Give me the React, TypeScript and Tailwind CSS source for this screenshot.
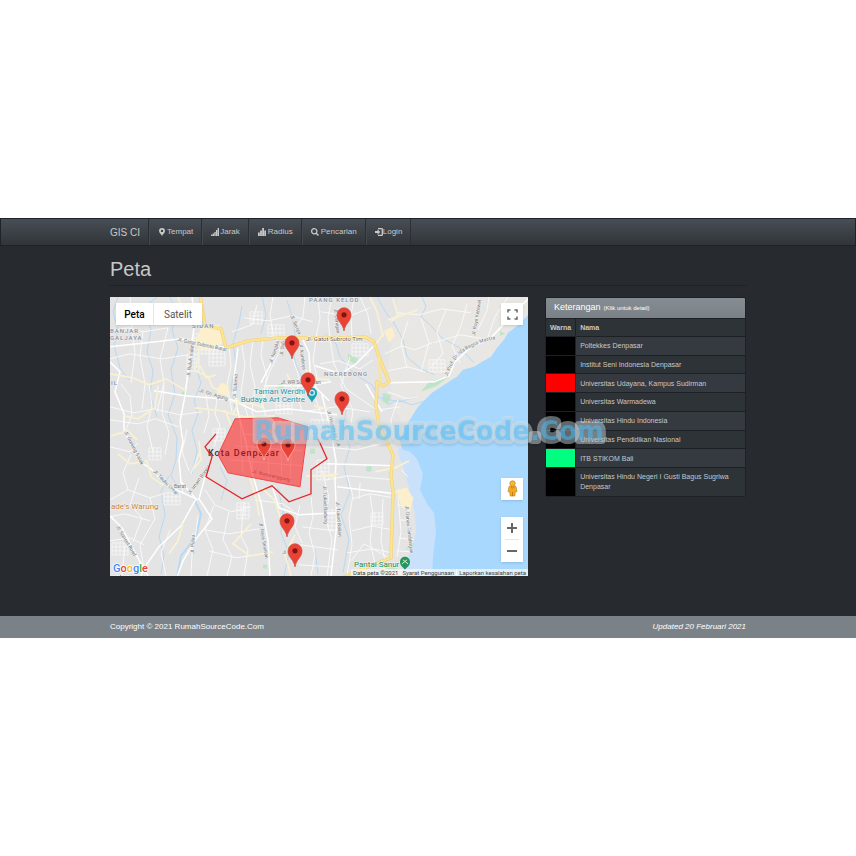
import React from 'react';

type IconProps = { children: React.ReactNode };

const Icon = ({ children }: IconProps) => (
  <svg className="h-2 w-2 fill-current" viewBox="0 0 16 16" aria-hidden="true">
    {children}
  </svg>
);

const navItems = [
  {
    label: 'Tempat',
    gap: 'gap-px',
    icon: <path fillRule="evenodd" d="M8 0a6 6 0 0 0-6 6c0 3.500 4 6 6 10 2-4 6-6.500 6-10a6 6 0 0 0-6-6zm0 3.400a2.400 2.400 0 1 1 0 4.800 2.400 2.400 0 0 1 0-4.800z" />,
  },
  {
    label: 'Jarak',
    gap: 'gap-px',
    icon: <path d="M0 13h2.700v3H0zM3.300 11H6v5H3.300zM6.600 8h2.700v8H6.600zM9.900 4h2.700v12H9.900zM13.200 0H16v16h-2.800z" />,
  },
  {
    label: 'Radius',
    gap: 'gap-0.5',
    icon: <path d="M0 9h3.600v7H0zM4.200 5h3.600v11H4.200zM8.400 0H12v16H8.400zM12.600 5H16v11h-3.400z" />,
  },
  {
    label: 'Pencarian',
    gap: 'gap-0.5',
    icon: <path fillRule="evenodd" d="M6.500 0a6.500 6.500 0 1 0 3.400 12l4 4 2.100-2.100-4-4A6.500 6.500 0 0 0 6.500 0zm0 2.500a4 4 0 1 1 0 8 4 4 0 0 1 0-8z" />,
  },
  {
    label: 'Login',
    gap: 'gap-0',
    icon: <path d="M0 6h5V2.500L10.500 8 5 13.500V10H0zM6 0h7.500A2.500 2.500 0 0 1 16 2.500v11a2.500 2.500 0 0 1-2.500 2.500H6v-2.500h7.200v-11H6z" />,
  },
];

const places = [
  { name: 'Poltekkes Denpasar', color: 'bg-black' },
  { name: 'Institut Seni Indonesia Denpasar', color: 'bg-black' },
  { name: 'Universitas Udayana, Kampus Sudirman', color: 'bg-[#ff0000]' },
  { name: 'Universitas Warmadewa', color: 'bg-black' },
  { name: 'Universitas Hindu Indonesia', color: 'bg-black' },
  { name: 'Universitas Pendidikan Nasional', color: 'bg-black' },
  { name: 'ITB STIKOM Bali', color: 'bg-[#00ff80]' },
  { name: 'Universitas Hindu Negeri I Gusti Bagus Sugriwa Denpasar', color: 'bg-black' },
];

const markers = [
  { x: 344, y: 331, outline: '#cf4a40' },
  { x: 292, y: 359, outline: '#cf4a40' },
  { x: 308, y: 396, outline: '#cf4a40' },
  { x: 342, y: 415, outline: '#cf4a40' },
  { x: 264, y: 460, outline: '#ffb3ad' },
  { x: 288, y: 461, outline: '#ffb3ad' },
  { x: 287, y: 537, outline: '#cf4a40' },
  { x: 295, y: 567, outline: '#cf4a40' },
];

// street names: text, x, y, rotation
const streets: [string, number, number, number][] = [
  ['Jl. Gatot Subroto Barat', 177, 341, 12],
  ['Jl. Buluh Indah', 190, 377, -83],
  ['Jl. Gn. Agung', 199, 392, 17],
  ['Jl. Sutomo', 236, 398, -86],
  ['Jl. WR Supratman', 281, 384, 0],
  ['Jl. Nangka', 272, 364, -72],
  ['Jl. Suli', 283, 356, -84],
  ['Jl. Kamboja', 299, 344, 82],
  ['Jl. Seroja', 290, 316, 66],
  ['Jl. Cenigan', 334, 309, 84],
  ['Jl. Raya Ketewel', 475, 336, -80],
  ['Jl. Hayam Wuruk', 327, 411, 74],
  ['Jl. Gunung Salak', 124, 432, 63],
  ['Jl. Teuku Umar', 153, 472, 45],
  ['Barat', 174, 488, 0],
  ['Jl. Imam Bonjol', 190, 495, -54],
  ['Jl. Waturenggong', 252, 473, 13],
  ['Jl. Sunset Road', 116, 527, 59],
  ['Jl. Pulau', 194, 554, -88],
  ['Jl. Raya Sesetan', 259, 523, 80],
  ['Jl. Tukad Badung', 323, 486, 88],
  ['Jl. Tukad Balian', 336, 502, 86],
  ['Jl. Danau Tamblingan', 405, 506, 84],
  ['Jl. Kerta', 282, 554, 4],
];

// dense residential blocks: x, y, columns, rows
const blocks = [
  [194, 334, 7, 6],
  [209, 350, 5, 5],
  [268, 325, 5, 4],
  [352, 344, 5, 4],
  [164, 493, 5, 4],
  [119, 309, 5, 4],
  [112, 543, 5, 4],
  [328, 510, 4, 6],
  [276, 402, 5, 4],
  [371, 513, 4, 4],
  [317, 460, 4, 6],
  [149, 448, 4, 4],
  [237, 503, 4, 5],
  [213, 429, 4, 4],
  [429, 360, 5, 4],
  [187, 355, 4, 5],
  [250, 312, 4, 4],
  [311, 420, 5, 5],
];

const HIGHWAY =
  'M200 295l5 31 16 3 5 19 22-7 30-3h60l27-1 9 5 5 15 10 25-6 4-6-4-1 25 3 19 14 29-2 20 2 17-2 66-21 8-32 14';

const MapCanvas = () => (
  <svg
    className="block h-full w-full font-['Roboto',sans-serif]"
    viewBox="110 297 418 279"
    preserveAspectRatio="xMidYMid slice"
    role="img"
    aria-label="Peta Kota Denpasar"
  >
    <rect x="100" y="287" width="440" height="300" fill="#e4e4e4" />
    <path fill="#e9e7e3" d="M400 287h138v28l-20 18-26 29-30 18-34 27-18 33-17-35-5-40z" />

    {/* sea and shallow water */}
    <path fill="#a8d8fe" d="M540 304L528 315l-8 9-12 9-4 7-7 8-6 9-9 5-8 5-11 3-6 7-5 3-20 13-14 14-10 16-8 17 2 10 5 7 5 10 2 12 3 17 5 21 0 17-3 13-9 15v24h134z" />
    <path fill="#c9e1fb" d="M398 447l5 3 7 2 7 7 6 15-3 16 7 14 7 9 2 19-3 25-1 20v15h-30v-24l9-16 5-20-1-18-7-30-4-15-5-13z" />

    {/* parks */}
    <g fill="#bfe5c8">
      <path d="M429 382l20-5-12 9-16 6zM348 354l10 5-2 6-8-5zM383 393l8 3-3 9-6-4zM500 331l5 3-5 2zM277 385l6-2 1 5-6 1zM410 542l5 3-9 5zM389 565l9 4-11 6h-14z" />
      <circle cx="184" cy="394" r="2.500" />
      <circle cx="369" cy="469" r="3" />
      <path d="M310 449h5v5h-5zM263 565h4v4h-4z" />
    </g>

    {/* rivers */}
    <g fill="none" stroke="#b9d9f2" strokeWidth="1">
      <path d="M118 297l-5 15 5 18-4 16 6 22 9 12" />
      <path d="M157 297l-12 10 6 23-4 22 6 19-3 24 7 22" />
      <path d="M170 297l7 17-5 16 6 18-7 22 4 24-7 21 9 23-1 22-5 16 10 16" />
      <path d="M198 349l-3 17 6 17-7 18 4 13-6 17 5 20-5 23" />
      <path d="M194 499l7 15-5 23-15 19-4 21" strokeWidth="2" />
      <path d="M242 306l-3 17-6 20 3 22-5 22 4 22" />
      <path d="M287 301l5 15 3 18-3 14 4 17 6 12 10 16" />
      <path d="M325 334l11 10 4 13 14 17 18 11 7 13 21 4 16-5" />
      <path d="M377 297l9 16 8 10 9 17 4 17 14 12 14 6" />
      <path d="M422 297l4 10-5 10 9 8 12 13 19 11 13 14" />
      <path d="M262 297l4 18-5 19" />
      <path d="M346 410l-3 20 7 17-6 20 6 25-9 23 8 24-6 34" />
      <path d="M278 488l5 23-2 22 8 20-5 23" />
      <path d="M169 476l-8 16 4 23-6 22 5 18-3 20" />
      <path d="M315 550l3 25M220 467l7 14-6 19" />
      <path d="M388 405l10-5 14 5 13-4" />
    </g>

    {/* dense blocks */}
    <g fill="none" stroke="#f7f7f7" strokeWidth="0.8">
      {blocks.map(([x, y, cols, rows]) => (
        <g key={`${x}-${y}`}>
          {Array.from({ length: rows }, (_, i) => (
            <path key={`r${i}`} d={`M${x} ${y + i * 4}h${cols * 4 - 4}`} />
          ))}
          {Array.from({ length: cols }, (_, i) => (
            <path key={`c${i}`} d={`M${x + i * 4} ${y}v${rows * 4 - 4}`} />
          ))}
        </g>
      ))}
    </g>

    {/* minor roads */}
    <g fill="none" stroke="#fafafa" strokeWidth="0.9">
      <path d="M110 331l18-3 15 4 25-4M130 297l2 31 3 26-4 29M143 331l-3 26 5 27-3 25M168 328l-8 31 4 24-7 29M110 359l20-5 32 5 26-4M110 407l24 6 20-4 26 6 22-3" />
      <path d="M110 420l28 4 17-5 24 8M121 384l9 12 2 19-7 17M149 384l3 22-5 20 6 26M164 386l-2 27 7 20-4 22M206 395l3 21-5 17M218 392l-3 22 5 12-6 21M229 345l2 22-4 18 5 27M241 341l4 23-4 29 7 24" />
      <path d="M253 340l-3 25 5 22-3 25 3 8M263 338l-2 17 6 22-5 24 4 17M282 340l-3 13-9 18-7 21M293 359l6 18-2 17 5 17M316 339l-3 22 4 16-2 20 9 26" />
      <path d="M318 299l2 19-4 20M332 297l-4 20 2 22M354 297l-3 20 1 20M305 297l-2 20-8 12M273 297l-3 18 4 24M244 318l24 3 24-5 21 6M321 312l29 4 20-8M257 305l-5 20-20 7M360 297l8 18 3 19" />
      <path d="M385 354l17-8 13 4 17-7M388 371l20-4 17 5M408 321l-7 22 6 25M421 318l8 25-8 29M446 310l-9 22 6 22-12 13M467 304l-6 22-9 20 8 17M398 313l21 2 23-6 29 4M433 343l27-8 24 4M489 297l-2 14-9 19M508 297l-13 20-7 20" />
      <path d="M388 392l19 7 10-2M380 410l20-3M398 400l-7 20 3 17M320 364l18-3 22 8 13-9M330 340l4 24 12 25 29 20M350 357l-9 29 12 24-3 22M308 411l28-4 34 5M309 427l35-3 36 4M324 447l32 3 25-6" />
      <path d="M243 434l59 5M235 446l67 5M230 460l72 6M240 420l3 53M254 420l-2 55M270 419l-2 60M280 420l2 63M292 422l-2 62" />
      <path d="M326 480l22-4 46 4M347 475l6 21-4 22 3 27-5 31M360 483l-1 16M352 499l18-5 24 4M370 495l3 20-3 26 5 23M383 499l-2 42 4 20M352 531l20-5 20 4M347 553l26-4 19 4M351 561l13-17 25 14" />
      <path d="M311 497l2 20-4 16 6 22-4 21M322 470l7 28-4 19 7 22-5 37M300 505l-5 22 7 16M302 527l32 4M300 545l38 5M299 565l32 2" />
      <path d="M205 490l10 15 16 7 20-5M214 505l-9 25 8 20-6 26M229 512l-6 28 9 17-5 19M244 502l-3 34 7 14-4 26M205 530l24 4 30-5M209 551l27 7 27-4M193 533l-2 43M198 516l-3 24M255 500l28 4 10 7" />
      <path d="M110 447l20 5 8-9M131 455l-8 18 5 17-18 10M128 490l22 8 13-4M139 478l-9 27 12 13-9 24M110 517l15-3 25 7M150 498l5 21-15 26 5 31M110 541l20-3 14 7M125 545l-3 31M170 530l-9 23 5 23M180 476l3 18M187 430l-5 22 7 19M200 452l-9 22" />
      <path d="M401 470l7 7M398 505l12 2M400 520l10 1M399 538l15 2M397 551l14 1M398 497l3 35-4 25" />
    </g>

    {/* secondary streets */}
    <g fill="none" stroke="#ffffff" strokeWidth="1.500">
      <path d="M110 347l46-5 25-3 45 9M110 362l10 10-5 20 9 22 0 17 15 30 12 8 15 16 32 15" />
      <path d="M192 297l3 25-4 25-3 25-3 24-5 26 3 20-4 18 2 22 15 17-15 27-22 21-12 17-15 30" />
      <path d="M154 391l31 5 47 4 25 12 31-3 49 6" />
      <path d="M238 348l-4 30 3 30 9 35 6 30 9 30 7 38 2 35" />
      <path d="M110 516l12 12 18 34 8 14M205 477l-6 22 13 20-16 20-13 22-6 16" />
      <path d="M388 383l46-1 15-6 6-14 16-15 18-7 17-18 22-23" />
      <path d="M366 384l16 28M315 366l26 8 15-10 20-20M322 395l9 37 5 29-1 20 2 42-6 53M327 464l67 2M337 487l58 7" />
      <path d="M302 338l7 15 2 30 18 18M278 338l-5 22-12 23M266 386l42 0 23-4" />
      <path d="M272 486l7 22 20 7 39-2" />
    </g>

    {/* pale yellow roads */}
    <g fill="none" stroke="#faf1d2" strokeWidth="1.700">
      <path d="M110 374l23 4 16 7 17-6 20 12M129 317l9 5 20-5M158 386l-3 22-17 11-14-3" />
      <path d="M199 349l-4 22 13 6 5 11 13 4 3 8M200 366l6 12 10-3M225 410l8 20M195 408l27 3 22 6 31-1" />
      <path d="M262 488l13 13 6 19M250 478l7 23 2 15M118 454l12 10 17-3 4 16 13 9" />
      <path d="M388 320l30-10M393 299l5 17-7 6M374 347l10-14M330 380l-17-2-8-9M328 409l-14-3M375 472l20-4 14-7M338 474l-17 2" />
      <path d="M199 441l2 19-7 9M251 524l-18 20 17 12 23-4M111 436l17-5 9 9M183 523l-5 18-9 13M295 535l-10 20 6 21M394 492l14 0 5 7M379 567l14 5" />
      <path d="M370 297l7 15 6 25M178 297l8 21M261 408l7-22M306 400l-11-7-8-19" />
      <path d="M229 402l24 2 10 4M232 392l7 10-6 12M306 476l30 0M282 497l-9-11" />
    </g>
    <path fill="#fbf0cb" d="M202 326l17-1 4 18-9 7-14-1-6-6zM384 331l8-4 3 9-6 7zM396 490l11-2 6 12-3 12-8-4zM221 383l8 3-2 10-11-3z" />

    {/* highways */}
    <g fill="none" strokeLinejoin="round">
      <path stroke="#f0d27a" strokeWidth="3.400" d={HIGHWAY} />
      <path stroke="#fde491" strokeWidth="2.200" d={HIGHWAY} />
      <path stroke="#fde491" strokeWidth="2" d="M379 357l1 25" />
    </g>

    {/* street names */}
    <g fill="#73777b" fontSize="5" stroke="#f1f1f1" strokeWidth="1" paintOrder="stroke">
      {streets.map(([name, x, y, angle]) => (
        <text key={name} x={x} y={y} transform={`rotate(${angle} ${x} ${y})`}>
          {name}
        </text>
      ))}
      <path id="coast-road" d="M447 377L454 362Q460 350 484 342L500 338" fill="none" stroke="none" />
      <text>
        <textPath href="#coast-road">Jl. Prof. Dr. Ida Bagus Mantra</textPath>
      </text>
    </g>
    <text x="306" y="341" fontSize="6" fill="#7b5b33" stroke="#fff" strokeWidth="1" paintOrder="stroke">
      Jl. Gatot Subroto Tim
    </text>

    {/* districts */}
    <g fill="#8490a3" fontSize="6" fontWeight="500" letterSpacing="1" stroke="#f1f1f1" strokeWidth="1" paintOrder="stroke">
      <text x="309" y="302">PAANG KELOD</text>
      <text x="324" y="376">NGEREBONG</text>
      <text x="192" y="328">SIDAN</text>
      <text x="110" y="333">BANJAR</text>
      <text x="110" y="340">GALJAYA</text>
      <text x="111" y="385">IL</text>
    </g>

    {/* drawn area and boundary */}
    <text x="208" y="456" fontSize="9" letterSpacing="1" fontWeight="500" fill="#303030">Kota Denpasar</text>
    <path d="M235 419l43-1 30 9-8 60-72-14-10-18z" fill="#ff0000" fillOpacity="0.5" stroke="#f04848" strokeWidth="1" />
    <path d="M216 434l-11 13 7 10-6 20 36 22 30-13 17 16 22-8v-24l16-11-9-20" fill="none" stroke="#e3262b" strokeWidth="1.300" />

    {/* points of interest */}
    <g stroke="#f4f4f4" strokeWidth="1" paintOrder="stroke" fontSize="8">
      <g fill="#1a95a7" textAnchor="end">
        <text x="305" y="394">Taman Werdhi</text>
        <text x="305" y="402">Budaya Art Centre</text>
      </g>
      <text x="111" y="509" fill="#c9853e">ade's Warung</text>
      <text x="354" y="567" fill="#238a52">Pantai Sanur</text>
      <text x="112" y="580" fill="#238a52">arten</text>
    </g>
    <path d="M312 403c-1-4-5-5-5-10a5 5 0 0 1 10 0c0 5-4 6-5 10z" fill="#16a5b8" />
    <circle cx="312" cy="393" r="2.400" fill="none" stroke="#d9f4f6" strokeWidth="1.200" />
    <path d="M405 571c-1-4-5-4-5-9a5 5 0 0 1 10 0c0 5-4 5-5 9z" fill="#28965a" />
    <path d="M402 564l5-4M403 560l5 4" stroke="#d4f0df" strokeWidth="1" />

    {markers.map(({ x, y, outline }) => (
      <g key={`${x}-${y}`} transform={`translate(${x} ${y})`}>
        <path d="M0 0C-1-7-7-9.500-7-16A7 7 0 0 1 7-16C7-9.500 1-7 0 0Z" fill="#ea4335" stroke={outline} strokeWidth="0.800" />
        <circle cy="-16" r="2.600" fill="#811411" />
      </g>
    ))}

    <text x="113" y="572" fontSize="11" fontWeight="500" stroke="#fff" strokeWidth="1.400" paintOrder="stroke">
      <tspan fill="#4285f4">G</tspan>
      <tspan fill="#ea4335">o</tspan>
      <tspan fill="#fbbc05">o</tspan>
      <tspan fill="#4285f4">g</tspan>
      <tspan fill="#34a853">l</tspan>
      <tspan fill="#ea4335">e</tspan>
    </text>
  </svg>
);

const MapPanel = () => (
  <div className="relative aspect-[3/2] overflow-hidden bg-[#e5e5e5] font-['Roboto',sans-serif]">
    <MapCanvas />
    <div className="absolute top-[6px] left-[6px] flex h-[22px] bg-white text-[10px] shadow-sm">
      <button type="button" className="w-[38px] border-r border-gray-200 font-medium text-black">Peta</button>
      <button type="button" className="w-12 text-[#565656]">Satelit</button>
    </div>
    <button type="button" aria-label="Layar penuh" className="absolute top-[6px] right-[5px] flex h-[22px] w-[22px] items-center justify-center bg-white shadow-sm">
      <svg className="h-[11px] w-[11px]" viewBox="0 0 11 11" fill="none" stroke="#666" strokeWidth="1.500">
        <path d="M1 3.500V1h2.500M7.500 1H10v2.500M10 7.500V10H7.500M3.500 10H1V7.500" />
      </svg>
    </button>
    <button type="button" aria-label="Street View" className="absolute right-[5px] bottom-[76px] flex h-[22px] w-[22px] items-center justify-center bg-white shadow-sm">
      <svg className="h-[17px] w-[11px]" viewBox="0 0 11 18">
        <path d="M1.500 8Q1.500 6.500 3 6.500h5q1.500 0 1.500 1.500l.7 4.500H8.500L8 17H3l-.5-4.500H.8z" fill="#f5a81c" stroke="#b87a1d" strokeWidth="0.600" />
        <circle cx="5.500" cy="3.700" r="2.900" fill="#fbb62b" stroke="#b87a1d" strokeWidth="0.600" />
        <path d="M3.500 6.800l2 2 2-2M5.500 12.500V17" fill="none" stroke="#a96a16" strokeWidth="0.700" />
      </svg>
    </button>
    <div className="absolute right-[5px] bottom-[14px] flex h-[45px] w-[22px] flex-col bg-white px-1 shadow-sm">
      <button type="button" aria-label="Perbesar" className="flex flex-1 items-center justify-center border-b border-gray-200">
        <svg className="h-[10px] w-[10px]" viewBox="0 0 10 10" stroke="#666" strokeWidth="2">
          <path d="M5 0v10M0 5h10" />
        </svg>
      </button>
      <button type="button" aria-label="Perkecil" className="flex flex-1 items-center justify-center">
        <svg className="h-[10px] w-[10px]" viewBox="0 0 10 10" stroke="#666" strokeWidth="2">
          <path d="M0 5h10" />
        </svg>
      </button>
    </div>
    <div className="absolute right-0 bottom-0 flex h-[7px] items-center bg-[#f5f5f5]/75 text-[6px] leading-[7px] whitespace-nowrap text-[#444]">
      <span className="px-0.5">Data peta ©2021</span>
      <a href="#syarat" className="px-0.5">Syarat Penggunaan</a>
      <a href="#laporkan" className="border-l border-white px-0.5">Laporkan kesalahan peta</a>
    </div>
  </div>
);

const Legend = () => (
  <section className="overflow-hidden rounded-xs border border-[#1d2024] bg-[#2e3338]">
    <h2 className="flex h-5 items-center gap-[3px] bg-linear-to-b from-[#858c92] to-[#7a8288] px-2 text-[9px] text-white">
      Keterangan <small className="text-[6px]">(Klik untuk detail)</small>
    </h2>
    <table className="h-[178px] w-full border-collapse text-left text-[7px] leading-[10px] text-[#c8c8c8]">
      <thead>
        <tr className="border-t border-[#1d2024]">
          <th className="w-[29px] border-r border-[#1d2024] px-1 pt-1 pb-[3px]">Warna</th>
          <th className="px-1 pt-1 pb-[3px]">Nama</th>
        </tr>
      </thead>
      <tbody>
        {places.map((place) => (
          <tr key={place.name} className="border-t border-[#1d2024] odd:bg-[#353a41]">
            <td className={`border-r border-[#1d2024] ${place.color}`} />
            <td className="px-1 pt-1 pb-[3px]">{place.name}</td>
          </tr>
        ))}
      </tbody>
    </table>
  </section>
);

const Watermark = () => (
  <svg
    className="pointer-events-none absolute top-[190px] left-1/2 h-10 w-[360px] -translate-x-1/2 font-['DejaVu_Sans',sans-serif] drop-shadow-[0_2px_1px_rgba(0,0,0,0.2)]"
    viewBox="0 0 360 40"
  >
    <text
      x="181"
      y="32"
      textAnchor="middle"
      fontSize="26"
      fontWeight="700"
      fill="#48c0ff"
      fillOpacity="0.5"
      stroke="#d3e4ec"
      strokeOpacity="0.45"
      strokeWidth="8"
      strokeLinejoin="round"
      paintOrder="stroke"
    >
      RumahSourceCode.Com
    </text>
  </svg>
);

const App = () => {
  return (
    <div className="bg-white py-[218px] font-['Liberation_Sans',Arial,sans-serif]">
      <div className="relative bg-[#272b30] text-[#c8c8c8]">
        <nav className="border border-[#1f2226] bg-linear-to-b from-[#484e55] to-[#313539]">
          <div className="mx-auto flex h-[26px] max-w-[636px] items-stretch text-[8px]">
            <a href="#home" className="flex items-center border-r border-[#2b2f33] pr-2 text-[10px]">GIS CI</a>
            {navItems.map((item) => (
              <a
                key={item.label}
                href={`#${item.label.toLowerCase()}`}
                className={`flex items-center border-r border-l border-r-[#2b2f33] border-l-[#43494f] px-2 hover:text-white ${item.gap}`}
              >
                <Icon>{item.icon}</Icon>
                {item.label}
              </a>
            ))}
          </div>
        </nav>

        <main className="mx-auto max-w-[636px] pb-10">
          <h1 className="mb-[11px] border-b border-[#1f2226] pt-[11px] pb-1 text-[20px] leading-6">Peta</h1>
          <div className="grid grid-cols-[minmax(0,1fr)_201px] items-start gap-[17px]">
            <MapPanel />
            <Legend />
          </div>
        </main>

        <footer className="bg-[#7a8288] text-[8px] text-white">
          <div className="mx-auto flex h-[22px] max-w-[636px] items-center justify-between">
            <span>Copyright © 2021 RumahSourceCode.Com</span>
            <em>Updated 20 Februari 2021</em>
          </div>
        </footer>

        <Watermark />
      </div>
    </div>
  );
};

export default App;
